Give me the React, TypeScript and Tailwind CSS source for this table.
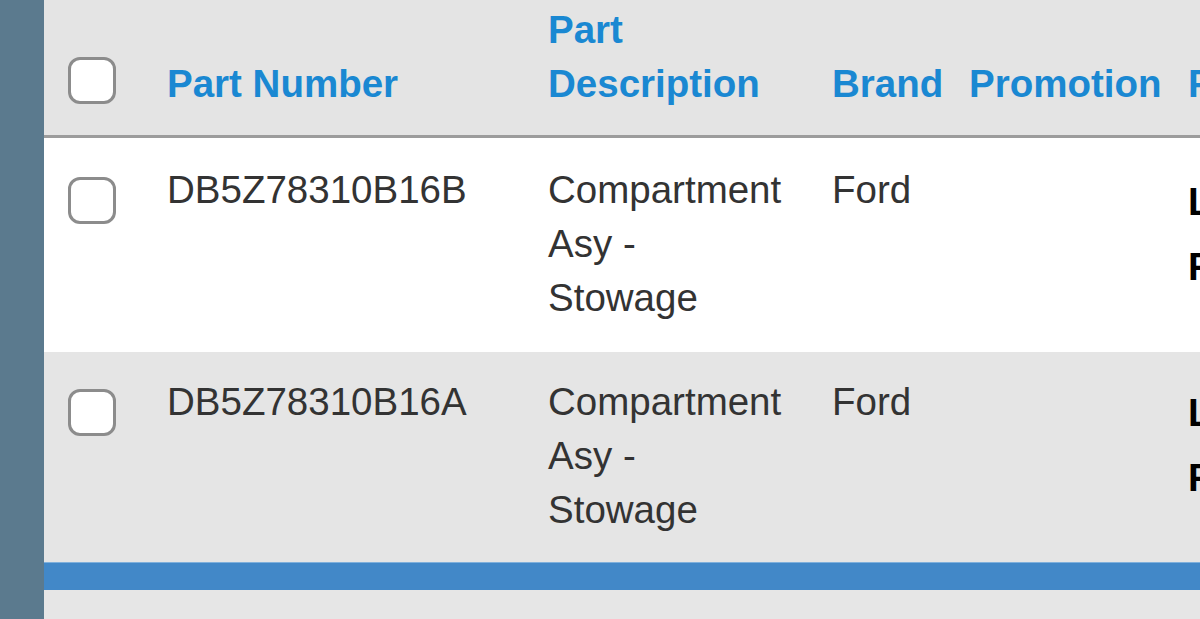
import React from "react";

const Box = () => (
  <div className="w-[48px] h-[47px] rounded-[12px] border-[3px] border-[#8c8c8c] bg-white shrink-0" />
);

type Row = { num: string; desc: string[]; brand: string; bg: string; pt: string; pb: string; lastPt: string };

const rows: Row[] = [
  { num: "DB5Z78310B16B", desc: ["Compartment", "Asy -", "Stowage"], brand: "Ford", bg: "bg-white", pt: "pt-[25px]", pb: "pb-[27px]", lastPt: "pt-[31px]" },
  { num: "DB5Z78310B16A", desc: ["Compartment", "Asy -", "Stowage"], brand: "Ford", bg: "bg-[#e5e5e5]", pt: "pt-[23px]", pb: "pb-[25px]", lastPt: "pt-[28px]" },
];

export default function App() {
  return (
    <div
      className="w-[1200px] h-[619px] overflow-hidden flex text-[38.5px] leading-[54px] text-[#333333]"
      style={{ fontFamily: '"Liberation Sans", Arial, sans-serif' }}
    >
      <div className="w-[44px] shrink-0 bg-[#5b7a8e]" />
      <div className="flex-1 flex flex-col bg-[#e5e5e5] min-w-0">
        {/* header */}
        <div className="h-[138px] shrink-0 flex items-end bg-[#e4e4e4] border-b-[3px] border-[#9c9c9c] pb-[24px] font-bold text-[#1a88d2] whitespace-nowrap">
          <div className="w-[123px] shrink-0 pl-[24px] pb-[7px]">
            <Box />
          </div>
          <div className="w-[381px] shrink-0">Part Number</div>
          <div className="w-[284px] shrink-0">
            <div>Part</div>
            <div>Description</div>
          </div>
          <div className="w-[137px] shrink-0">Brand</div>
          <div className="w-[219px] shrink-0">Promotion</div>
          <div className="w-[200px] shrink-0">Price</div>
        </div>
        {rows.map((r) => (
          <div key={r.num} className={`flex items-start shrink-0 whitespace-nowrap ${r.bg} ${r.pt} ${r.pb}`}>
            <div className="w-[123px] shrink-0 pl-[24px] pt-[14px]">
              <Box />
            </div>
            <div className="w-[381px] shrink-0">{r.num}</div>
            <div className="w-[284px] shrink-0">
              {r.desc.map((d) => (
                <div key={d}>{d}</div>
              ))}
            </div>
            <div className="w-[137px] shrink-0">{r.brand}</div>
            <div className="w-[219px] shrink-0" />
            <div className={`w-[200px] shrink-0 font-bold text-black leading-[65px] -mt-[2px] ${r.lastPt === "pt-[31px]" ? "pt-[8px]" : "pt-[7px]"}`}>
              <div>List</div>
              <div>Fleet</div>
            </div>
          </div>
        ))}
        <div className="h-[28px] shrink-0 bg-[#4288c8] border-t border-[#7fb0dc]" />
        <div className="flex-1 bg-[#e6e6e6]" />
      </div>
    </div>
  );
}
